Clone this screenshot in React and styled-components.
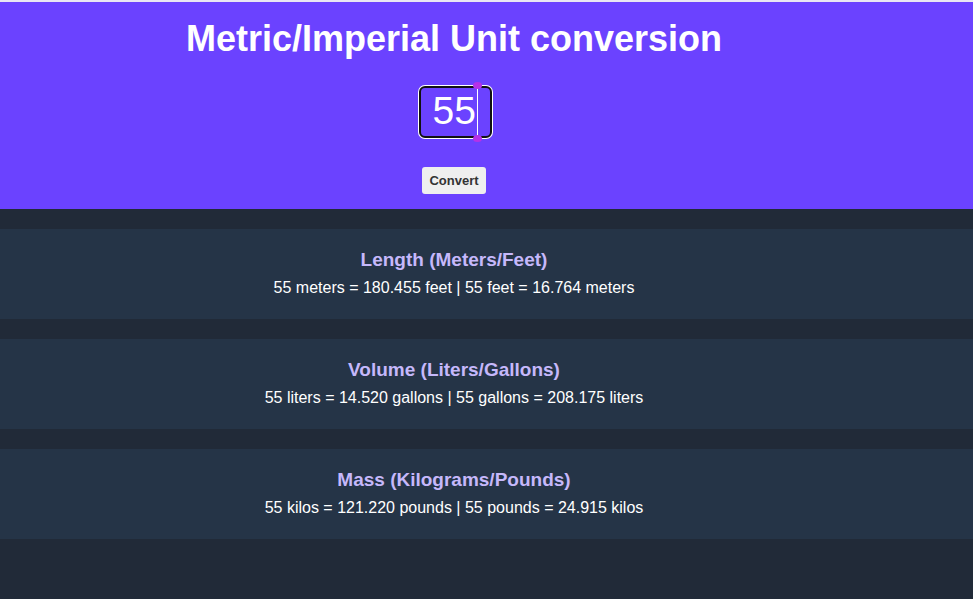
import React, {useState} from "react";
import styled, {createGlobalStyle} from "styled-components";

const GlobalStyle = createGlobalStyle`
  html, body {
    margin: 0;
    padding: 0;
    background-color: #212a38;
    font-family: "Liberation Sans", Arial, sans-serif;
  }
`

const convert = (n) => ({
  length: `${n} meters = ${(n * 3.281).toFixed(3)} feet | ${n} feet = ${(n * 0.3048).toFixed(3)} meters`,
  volume: `${n} liters = ${(n * 0.264).toFixed(3)} gallons | ${n} gallons = ${(n * 3.785).toFixed(3)} liters`,
  mass: `${n} kilos = ${(n * 2.204).toFixed(3)} pounds | ${n} pounds = ${(n * 0.453).toFixed(3)} kilos`,
})

const App = () => {
  const [value, setValue] = useState("55")
  const [num, setNum] = useState(55)
  const results = convert(num)

  return <>
    <GlobalStyle/>
    <Page>
      <TopLine/>
      <Header>
        <Title>Metric/Imperial Unit conversion</Title>
        <InputWrap>
          <NumberInput value={value} onChange={(e) => setValue(e.target.value)}/>
          <Caret/>
        </InputWrap>
        <ConvertButton onClick={() => setNum(Number(value) || 0)}>Convert</ConvertButton>
      </Header>
      <Results>
        <Card>
          <CardTitle>Length (Meters/Feet)</CardTitle>
          <CardText>{results.length}</CardText>
        </Card>
        <Card>
          <CardTitle>Volume (Liters/Gallons)</CardTitle>
          <CardText>{results.volume}</CardText>
        </Card>
        <Card>
          <CardTitle>Mass (Kilograms/Pounds)</CardTitle>
          <CardText>{results.mass}</CardText>
        </Card>
      </Results>
    </Page>
  </>
}

const Page = styled.div`
  min-height: 599px;
  display: flex;
  flex-direction: column;
`

const TopLine = styled.div`
  height: 2px;
  background-color: #e9e7f3;
`

const Header = styled.div`
  height: 207px;
  background-color: #6b42ff;
  display: flex;
  flex-direction: column;
  align-items: center;
  padding-right: 65px;
  box-sizing: border-box;
`

const Title = styled.h1`
  margin: 16px 0 0;
  font-size: 36px;
  font-weight: bold;
  color: #ffffff;
  line-height: 42px;
`

const InputWrap = styled.div`
  position: relative;
  margin-top: 26px;
  margin-left: 3px;
`

const NumberInput = styled.input`
  width: 73px;
  height: 52px;
  box-sizing: border-box;
  background-color: #6b42ff;
  color: #ffffff;
  font-family: "Liberation Sans", Arial, sans-serif;
  font-size: 39px;
  text-align: right;
  padding: 0 14px 3px 0;
  border: 2px solid #111111;
  border-radius: 6px;
  box-shadow: 0 0 0 1px #ffffff;
  caret-color: transparent;
  &:focus {
    outline: none;
  }
`

const Caret = styled.span`
  position: absolute;
  left: 58px;
  top: 1px;
  width: 1px;
  height: 50px;
  background-color: #ffffff;
  pointer-events: none;
  &::before, &::after {
    content: "";
    position: absolute;
    left: -4px;
    width: 9px;
    height: 7px;
    border-radius: 50%;
    background-color: #b531e8;
  }
  &::before {
    top: -5px;
  }
  &::after {
    bottom: -5px;
  }
`

const ConvertButton = styled.button`
  margin-top: 29px;
  height: 27px;
  padding: 0 7px;
  background-color: #efefef;
  color: #333333;
  font-family: "Liberation Sans", Arial, sans-serif;
  font-size: 13px;
  font-weight: bold;
  border: none;
  border-radius: 3px;
  cursor: pointer;
`

const Results = styled.div`
  display: flex;
  flex-direction: column;
  gap: 20px;
  padding: 20px 0;
`

const Card = styled.div`
  height: 90px;
  box-sizing: border-box;
  background-color: #253447;
  display: flex;
  flex-direction: column;
  align-items: center;
  padding: 20px 65px 0 0;
`

const CardTitle = styled.h2`
  margin: 0;
  font-size: 19px;
  line-height: 22px;
  font-weight: bold;
  color: #c6b8fb;
`

const CardText = styled.p`
  margin: 8px 0 0;
  font-size: 16px;
  line-height: 18px;
  color: #ffffff;
`

export default App;
